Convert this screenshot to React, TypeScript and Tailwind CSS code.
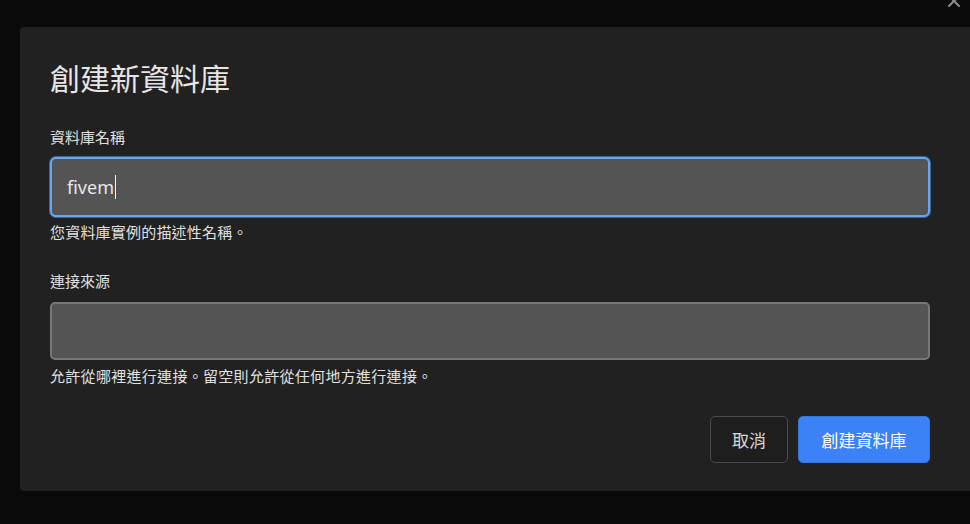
import { X } from "lucide-react";

const cjk = {
  fontFamily: '"Noto Sans CJK TC", "Noto Sans", sans-serif',
};

const latin = {
  fontFamily: '"Noto Sans", "Noto Sans CJK TC", sans-serif',
};

const App = () => {
  return (
    <div
      lang="zh-Hant-TW"
      className="relative h-[524px] w-[970px] overflow-hidden bg-[#0a0a0a]"
      style={cjk}
    >
      <button className="absolute right-[6px] top-[-9px] text-[#8a8a8a]">
        <X className="h-[20px] w-[20px]" strokeWidth={2.5} />
      </button>

      <div className="absolute left-[20px] top-[27px] flex h-[464px] w-[960px] flex-col rounded-[4px] bg-[#212121] pl-[30px] pt-[32px]">
        <h1 className="text-[30px] font-normal leading-[36px] text-[#e6e6e6]">
          創建新資料庫
        </h1>

        <div className="mt-[32px] w-[880px]">
          <label className="block text-[15px] leading-[20px] text-[#e0e0e0]">
            資料庫名稱
          </label>
          <div className="mt-[10px] flex h-[60px] items-center rounded-[6px] border-2 border-[#6aa6ee] bg-[#545454] pl-[15px] shadow-[0_0_0_1px_#3e6594]">
            <span className="text-[18px] text-[#e8e8e8]" style={latin}>
              fivem
            </span>
            <span className="ml-[1px] h-[24px] w-[1px] bg-[#f0f0f0]" />
          </div>
          <p className="mt-[5px] text-[15px] leading-[20px] tracking-[0.2px] text-[#e0e0e0]">
            您資料庫實例的描述性名稱。
          </p>

          <label className="mt-[29px] block text-[15px] leading-[20px] text-[#e0e0e0]">
            連接來源
          </label>
          <div className="mt-[11px] h-[58px] rounded-[5px] border-2 border-[#777777] bg-[#545454]" />
          <p className="mt-[6px] text-[15px] leading-[20px] tracking-[0.3px] text-[#e0e0e0]">
            允許從哪裡進行連接。留空則允許從任何地方進行連接。
          </p>

          <div className="mt-[30px] flex justify-end gap-[10px]">
            <button className="flex h-[47px] w-[78px] items-center justify-center rounded-[5px] border border-[#4a4a4a] bg-[#1e1e1e] text-[17px] text-[#d8d8d8]">
              取消
            </button>
            <button className="flex h-[47px] w-[132px] items-center justify-center rounded-[5px] border border-[#3575e0] bg-[#3b82f6] text-[17px] text-white">
              創建資料庫
            </button>
          </div>
        </div>
      </div>
    </div>
  );
};

export default App;
